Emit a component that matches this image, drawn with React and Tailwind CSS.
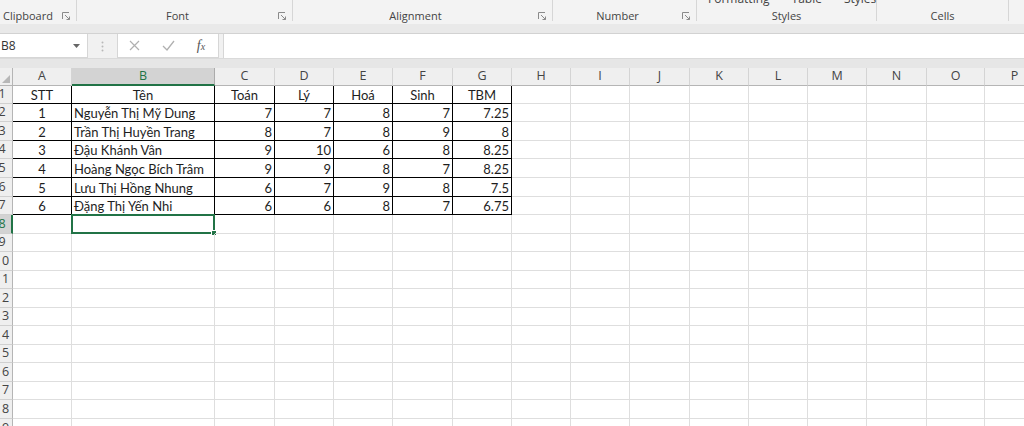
import React from "react";

const COLS = ["A", "B", "C", "D", "E", "F", "G", "H", "I", "J", "K", "L", "M", "N", "O", "P"];
const WIDTHS = [
  "w-[59px]", "w-[143px]", "w-[60px]", "w-[59px]", "w-[59px]", "w-[60px]", "w-[59px]", "w-[59px]",
  "w-[59px]", "w-[60px]", "w-[59px]", "w-[59px]", "w-[59px]", "w-[60px]", "w-[58px]", "w-[60px]",
];
const HEIGHTS = [
  "h-[18px]", "h-[18px]", "h-[19px]", "h-[18px]", "h-[19px]", "h-[19px]", "h-[18px]", "h-[19px]",
  "h-[18px]", "h-[19px]", "h-[18px]", "h-[19px]", "h-[18px]", "h-[19px]", "h-[18px]", "h-[19px]",
  "h-[18px]", "h-[19px]", "h-[19px]",
];

const DATA = [
  ["STT", "Tên", "Toán", "Lý", "Hoá", "Sinh", "TBM"],
  [1, "Nguyễn Thị Mỹ Dung", 7, 7, 8, 7, 7.25],
  [2, "Trần Thị Huyền Trang", 8, 7, 8, 9, 8],
  [3, "Đậu Khánh Vân", 9, 10, 6, 8, 8.25],
  [4, "Hoàng Ngọc Bích Trâm", 9, 9, 8, 7, 8.25],
  [5, "Lưu Thị Hồng Nhung", 6, 7, 9, 8, 7.5],
  [6, "Đặng Thị Yến Nhi", 6, 6, 8, 7, 6.75],
];

const Launcher = () => (
  <svg width="9" height="9" viewBox="0 0 9 9" fill="none" stroke="#8a8a8a" strokeWidth="1">
    <path d="M0.5 7V0.5H7" />
    <path d="M3 3L7.5 7.5M7.5 4.5v3h-3" />
  </svg>
);

const Group = ({ label, width, launcher, children, left }) => (
  <div className={`${width} h-[21px] flex flex-col border-r border-[#d6d6d6]`}>
    {children}
    <div className="flex items-end flex-1">
      <span className={`flex-1 leading-[11px] ${left ? "text-left pl-[3px]" : "text-center"}`}>{label}</span>
      {launcher && (
        <span className="w-[9px] mr-[5px] flex">
          <Launcher />
        </span>
      )}
    </div>
  </div>
);

const App = () => {
  return (
    <div className="w-[1024px] h-[426px] overflow-hidden bg-white font-['Open_Sans',sans-serif]">
      {/* ribbon group labels */}
      <div className="h-[24px] bg-[#f3f3f3] flex text-[11px] text-[#444] overflow-hidden">
        <Group label="Clipboard" width="w-[77px]" launcher left />
        <Group label="Font" width="w-[216px]" launcher />
        <Group label="Alignment" width="w-[260px]" launcher />
        <Group label="Number" width="w-[144px]" launcher />
        <Group label="Styles" width="w-[180px]">
          <div className="flex h-0 -mt-[8px] pl-[11px] gap-[22px] text-[12px] leading-[14px]">
            <span>Formatting</span>
            <span>Table</span>
            <span>Styles</span>
          </div>
        </Group>
        <Group label="Cells" width="w-[132px]" />
      </div>
      <div className="h-[10px] bg-[#e9e9e9] border-b border-[#d2d2d2]" />

      {/* formula bar */}
      <div className="h-[24px] bg-[#f1f1f1] flex items-stretch">
        <div className="w-[88px] bg-white border border-l-0 border-t-0 border-[#d6d6d6] flex items-center justify-between pl-[1px] pr-[7px] text-[12px] text-[#333]">
          <span>B8</span>
          <svg width="7" height="4" viewBox="0 0 7 4">
            <path d="M0 0h7L3.5 4z" fill="#666" />
          </svg>
        </div>
        <div className="w-[29px] flex items-center justify-center">
          <svg width="3" height="11" viewBox="0 0 3 11">
            <circle cx="1.5" cy="1.5" r="1" fill="#b8b8b8" />
            <circle cx="1.5" cy="5.5" r="1" fill="#b8b8b8" />
            <circle cx="1.5" cy="9.5" r="1" fill="#b8b8b8" />
          </svg>
        </div>
        <div className="w-[102px] bg-white border border-t-0 border-[#d6d6d6] flex items-center">
          <span className="w-[32px] flex justify-center">
            <svg width="11" height="11" viewBox="0 0 11 11" stroke="#b0b0b0" strokeWidth="1.2">
              <path d="M1 1l9 9M10 1l-9 9" />
            </svg>
          </span>
          <span className="w-[36px] flex justify-center">
            <svg width="13" height="11" viewBox="0 0 13 11" fill="none" stroke="#b0b0b0" strokeWidth="1.3">
              <path d="M1 6l4 4 7-9" />
            </svg>
          </span>
          <span className="w-[30px] text-center font-['Liberation_Serif',serif] italic text-[14px] text-[#555]">
            f<span className="text-[10px]">x</span>
          </span>
        </div>
        <div className="w-[4px]" />
        <div className="flex-1 bg-white border-l border-[#d6d6d6]" />
      </div>
      <div className="h-[10px] bg-[#e6e6e6] border-t border-[#dadada]" />

      {/* column headers */}
      <div className="flex h-[18px] bg-[#efefef] text-[12.5px] text-[#444]">
        <div className="w-[13px] shrink-0 border-r border-b border-[#b5b5b5] flex items-end justify-end p-[2px]">
          <svg width="8" height="8" viewBox="0 0 8 8">
            <path d="M8 0V8H0z" fill="#b7b7b7" />
          </svg>
        </div>
        {COLS.map((c, i) => (
          <div
            key={c}
            className={`${WIDTHS[i]} shrink-0 flex items-center justify-center border-r ${
              i === 1
                ? "bg-[#d3d3d3] text-[#217346] border-b-2 border-b-[#217346] border-r-[#ababab]"
                : "border-b border-[#b5b5b5] border-r-[#d4d4d4]"
            }`}
          >
            {c}
          </div>
        ))}
      </div>

      {/* rows */}
      {HEIGHTS.map((h, r) => {
        const rowData = DATA[r];
        const sel = r === 7;
        return (
          <div key={r} className={`flex ${h}`}>
            <div
              className={`w-[13px] shrink-0 overflow-hidden border-b border-[#d0d0d0] text-[12.5px] flex items-center ${
                sel ? "bg-[#d3d3d3] text-[#217346] border-r-2 border-r-[#217346]" : "bg-[#efefef] text-[#444] border-r border-r-[#b5b5b5]"
              }`}
            >
              <span className="w-[24px] -ml-[10px] shrink-0 text-center">{r + 1}</span>
            </div>
            {COLS.map((c, i) => {
              const inTable = rowData && i < 7;
              const v = inTable ? rowData[i] : "";
              const align =
                r === 0 || i === 0 ? "justify-center" : i === 1 ? "justify-start pl-[2px]" : "justify-end pr-[2px]";
              return (
                <div
                  key={c}
                  className={`${WIDTHS[i]} shrink-0 relative flex items-end leading-[15px] border-r border-b whitespace-nowrap font-['Lato',sans-serif] text-[13px] text-[#1e1e1e] ${
                    inTable ? "border-black" : "border-[#dedede]"
                  } ${r === 6 && i < 7 ? "border-b-black" : ""} ${r === 7 && i === 6 ? "border-r-[#dedede]" : ""} ${align}`}
                >
                  {v}
                  {sel && i === 1 && (
                    <div className="absolute -top-[1px] -left-[1px] -right-[1px] -bottom-[1px] border-2 border-[#217346]">
                      <div className="absolute -right-[4px] -bottom-[4px] w-[6px] h-[6px] bg-[#217346] border border-white" />
                    </div>
                  )}
                </div>
              );
            })}
          </div>
        );
      })}
    </div>
  );
};

export default App;
